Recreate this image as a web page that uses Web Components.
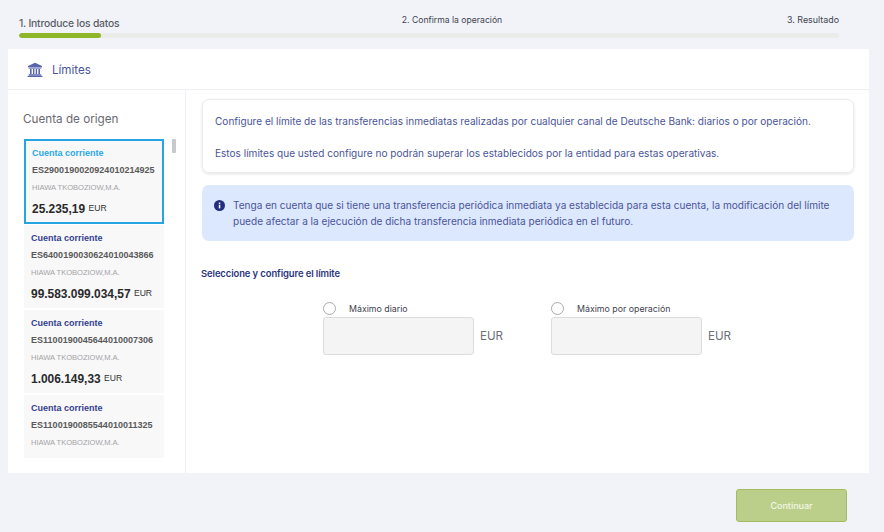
<!DOCTYPE html>
<html lang="es"><head><meta charset="utf-8">
<style>
html,body{margin:0;padding:0;height:100%}
body{width:884px;height:532px;overflow:hidden;background:#f1f3f8;font-family:Inter,"Noto Sans",sans-serif}
</style></head><body>
<app-page></app-page>
<script>
const F='Inter,"Noto Sans",sans-serif', A='"Liberation Sans",Arial,sans-serif';
function def(name,html,setup){
  customElements.define(name,class extends HTMLElement{
    constructor(){super();this.attachShadow({mode:'open'}).innerHTML=html}
    connectedCallback(){setup&&setup(this)}
  });
}
def('step-bar',`<style>
:host{display:block;padding:13px 45px 0 19px;box-sizing:border-box;height:49px}
.labels{display:grid;grid-template-columns:1fr 1fr 1fr;height:20px;font:400 8.65px/14px ${F};color:#3f4350}
.a{font-size:10.35px;font-weight:500;color:#5b5e66;letter-spacing:-.2px;line-height:20px}
.b{text-align:center;padding-left:46px}.c{text-align:right;font-size:8.9px}
.track{height:5px;border-radius:3px;background:#ebebea;overflow:hidden}
.fill{width:82px;height:5px;border-radius:3px;background:#8fb628}
</style><div class="labels"><span class="a">1. Introduce los datos</span><span class="b">2. Confirma la operación</span><span class="c">3. Resultado</span></div>
<div class="track"><div class="fill"></div></div>`);

def('bank-icon',`<style>:host{display:block;width:16px;height:16px;margin-top:1px}svg{display:block}</style>
<svg width="16" height="16" viewBox="0 0 16 16" fill="#5a66aa"><path d="M8 .8 15 4v1.2H1V4z"/><path d="M1.6 5.6h12.8v1H1.6z"/><path d="M3 7h1.6v5H3zM6 7h1.4v5H6zM8.7 7h1.4v5H8.7zM11.4 7H13v5h-1.6z"/><path d="M1.8 12.2h12.4v1.2H1.8zM.6 13.8h14.8V15H.6z"/></svg>`);

def('card-header',`<style>
:host{display:flex;align-items:center;height:41px;box-sizing:border-box;border-bottom:1px solid #eff0f3;padding-left:19px;gap:9px;font:400 11.6px ${F};color:#4a5599}
span{padding-top:2px}
</style><bank-icon></bank-icon><span><slot></slot></span>`);

def('account-item',`<style>
:host{display:block;height:83px;box-sizing:border-box;padding:6px 7px 0;background:#f8f8f9;font-family:${A};overflow:hidden;flex:none}
:host([selected]){border:2px solid #27a5e2;padding:5px 6px 0 6px;height:85px;margin-bottom:-1px}
.t{font-size:9px;font-weight:700;line-height:15px;color:#33408f}
:host([selected]) .t{color:#29a9e5}
.i{font-size:9px;font-weight:700;line-height:18px;color:#5a5a5a;white-space:nowrap;letter-spacing:.02px}
.h{font-size:7.6px;line-height:14px;color:#a3a3a5;margin-top:1.5px;white-space:nowrap;letter-spacing:-.05px}
.b{margin-top:4px;line-height:18px;font-size:11.95px;font-weight:700;color:#2a2a2c;white-space:nowrap}
.b small{font-size:8.6px;font-weight:400;color:#333;vertical-align:2px}
</style><div class="t">Cuenta corriente</div><div class="i"></div><div class="h">HIAWA TKOBOZIOW,M.A.</div><div class="b"></div>`,
el=>{const s=el.shadowRoot;s.querySelector('.i').textContent=el.getAttribute('iban');
 const b=el.getAttribute('balance');s.querySelector('.b').innerHTML=b?b+' <small>EUR</small>':'';});

def('account-list',`<style>
:host{display:block;width:178px;box-sizing:border-box;border-right:1px solid #eff0f3;padding:0 0 0 15px;position:relative;flex:none}
h2{margin:0;font:400 11.7px/16px ${F};color:#6a6a70;padding-top:21px;height:49px;box-sizing:border-box}
.list{display:flex;flex-direction:column;gap:2px;width:140px;margin-left:1px;height:319px;overflow:hidden}
.thumb{position:absolute;left:164px;top:49px;width:4px;height:14px;background:#c9c9cb;border-radius:1px}
</style><h2>Cuenta de origen</h2><div class="list"><slot></slot></div><div class="thumb"></div>`);

def('intro-box',`<style>
:host{display:block;height:74px;box-sizing:border-box;border:1px solid #ececef;border-radius:7px;box-shadow:0 1px 3px rgba(60,60,80,.14);padding:13px 12px 0;font:400 10.07px/16px ${F};color:#4a5599}
p{margin:0 0 16px;white-space:nowrap}
</style><p>Configure el límite de las transferencias inmediatas realizadas por cualquier canal de Deutsche Bank: diarios o por operación.</p><p>Estos límites que usted configure no podrán superar los establecidos por la entidad para estas operativas.</p>`);

def('info-box',`<style>
:host{display:flex;height:56px;box-sizing:border-box;margin-top:12px;border-radius:7px;background:#dce8fe;padding:12px 12px 0 12px;gap:8px;font:400 10.07px/16px ${F};color:#4a5599}
svg{flex:none;margin-top:3px}
div{white-space:nowrap}
</style><svg width="11" height="11" viewBox="0 0 11 11"><circle cx="5.5" cy="5.5" r="5.5" fill="#232f7d"/><rect x="4.8" y="4.7" width="1.5" height="3.7" fill="#fff"/><rect x="4.8" y="2.6" width="1.5" height="1.4" fill="#fff"/></svg>
<div>Tenga en cuenta que si tiene una transferencia periódica inmediata ya establecida para esta cuenta, la modificación del límite<br>puede afectar a la ejecución de dicha transferencia inmediata periódica en el futuro.</div>`);

def('limit-field',`<style>
:host{display:block;width:228px;flex:none}
.top{display:flex;align-items:center;height:18px;gap:13px;font:400 8.8px ${F};color:#3f4350}
.r{width:11px;height:11px;border:1px solid #aaa;border-radius:50%;background:#fff}
.row{display:flex;align-items:center;gap:6px;margin-top:0}
.in{width:151px;height:38px;box-sizing:border-box;background:#f4f4f4;border:1px solid #dcdcdc;border-radius:3px}
.e{font:400 11.6px ${F};color:#6b6f78}
</style><div class="top"><span class="r"></span><span><slot></slot></span></div><div class="row"><div class="in"></div><span class="e">EUR</span></div>`);

def('limits-panel',`<style>
:host{display:block;flex:1;padding:9px 15px 0 16px;box-sizing:border-box;min-width:0}
h3{margin:26px 0 0 -1px;font:600 9.45px/14px ${F};color:#2b3580;letter-spacing:-.1px}
.fields{display:flex;margin:18px 0 0 121px}
</style><intro-box></intro-box><info-box></info-box><h3>Seleccione y configure el límite</h3>
<div class="fields"><limit-field>Máximo diario</limit-field><limit-field>Máximo por operación</limit-field></div>`);

def('app-page',`<style>
:host{display:block;height:532px}
.card{margin:0 15px 0 8px;height:424px;background:#fff;display:flex;flex-direction:column}
.body{flex:1;display:flex;min-height:0}
.foot{display:flex;justify-content:flex-end;padding:16px 37px 0 0}
button{width:111px;height:33px;border:1px solid #a3bd5c;border-radius:3px;background:#bccf8a;color:#f3f7e4;font:500 9px ${F};padding:0}
</style><step-bar></step-bar>
<div class="card"><card-header>Límites</card-header><div class="body">
<account-list>
<account-item selected iban="ES2900190020924010214925" balance="25.235,19"></account-item>
<account-item iban="ES6400190030624010043866" balance="99.583.099.034,57"></account-item>
<account-item iban="ES1100190045644010007306" balance="1.006.149,33"></account-item>
<account-item iban="ES1100190085544010011325"></account-item>
</account-list><limits-panel></limits-panel></div></div>
<div class="foot"><button>Continuar</button></div>`);
</script></body></html>
